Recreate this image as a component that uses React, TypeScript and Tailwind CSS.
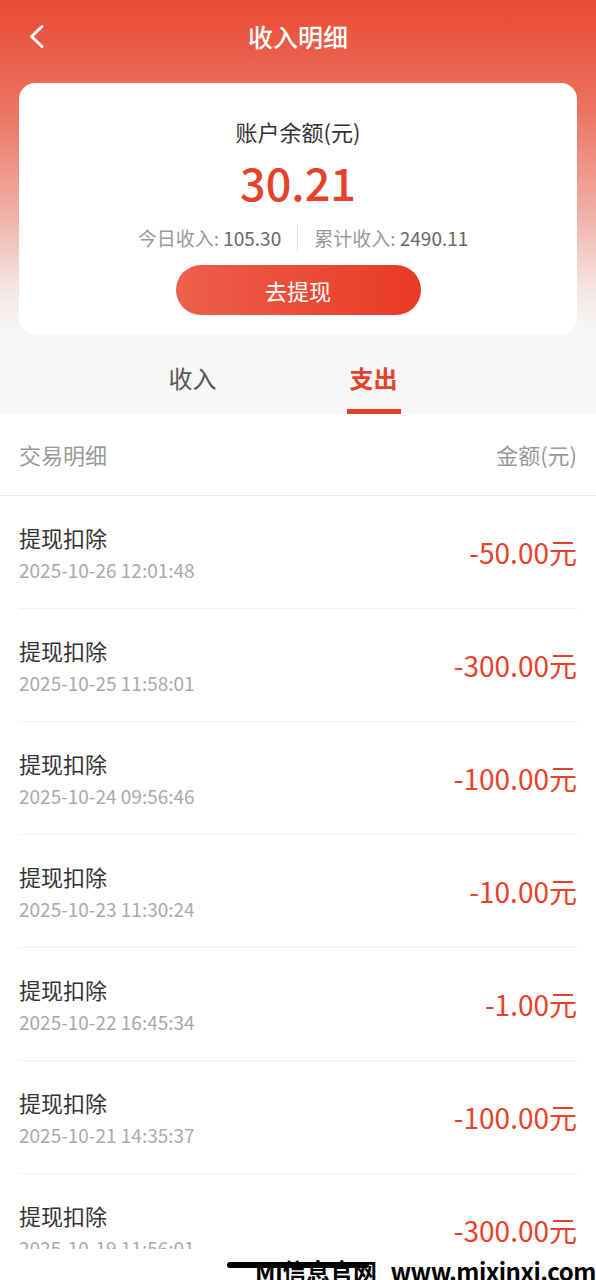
const records = [
  { title: '提现扣除', time: '2025-10-26 12:01:48', amount: '-50.00元' },
  { title: '提现扣除', time: '2025-10-25 11:58:01', amount: '-300.00元' },
  { title: '提现扣除', time: '2025-10-24 09:56:46', amount: '-100.00元' },
  { title: '提现扣除', time: '2025-10-23 11:30:24', amount: '-10.00元' },
  { title: '提现扣除', time: '2025-10-22 16:45:34', amount: '-1.00元' },
  { title: '提现扣除', time: '2025-10-21 14:35:37', amount: '-100.00元' },
  { title: '提现扣除', time: '2025-10-19 11:56:01', amount: '-300.00元' },
];

const App = () => {
  return (
    <div
      className="relative flex h-[1280px] w-full flex-col overflow-hidden bg-white"
      style={{ fontFamily: '"Noto Sans CJK SC", "Noto Sans", sans-serif' }}
    >
      {/* Top gradient area */}
      <div className="bg-[linear-gradient(180deg,#E94A34_0px,#EC7360_110px,#EFAEA4_210px,#F5E6E3_290px,#F7F7F7_330px)]">
        {/* Nav bar */}
        <div className="grid h-[72px] grid-cols-[1fr_auto_1fr] items-center">
          <div className="pl-[28px]">
            <svg width="17" height="25" viewBox="0 0 17 25" fill="none">
              <path d="M14 2.5 L3.5 12.5 L14 22.5" stroke="white" strokeWidth="3" strokeLinecap="round" strokeLinejoin="round" />
            </svg>
          </div>
          <h1 className="text-[25px] font-medium leading-none text-white">收入明细</h1>
          <div />
        </div>

        {/* Balance card */}
        <div className="mx-[19px] mt-[11px] flex h-[251px] flex-col items-center rounded-[16px] bg-white">
          <p className="pt-[33px] text-[22px] leading-[30px] text-[#333]">账户余额(元)</p>
          <p className="mt-[10px] text-[45px] font-medium leading-[52px] text-[#E8412B]">30.21</p>
          <div className="mt-[17px] flex items-center pl-[10px] text-[19px] leading-[26px]">
            <span className="text-[#999]">
              今日收入: <span className="text-[#666]">105.30</span>
            </span>
            <span className="mx-[16px] h-[25px] w-px bg-[#ddd]" />
            <span className="text-[#999]">
              累计收入: <span className="text-[#666]">2490.11</span>
            </span>
          </div>
          <button className="mt-[14px] h-[50px] w-[245px] rounded-full bg-[linear-gradient(90deg,#EC604B,#E83A24)] text-[22px] text-white">
            去提现
          </button>
        </div>

        {/* Tabs */}
        <div className="flex h-[80px] pl-[102px]">
          <div className="flex w-[181px] flex-col items-center pt-[28px]">
            <span className="text-[24px] leading-[32px] text-[#555]">收入</span>
            <span className="mt-[15px] h-[5px] w-[54px] bg-transparent" />
          </div>
          <div className="flex w-[181px] flex-col items-center pt-[28px]">
            <span className="text-[24px] font-bold leading-[32px] text-[#E8412B]">支出</span>
            <span className="mt-[15px] h-[5px] w-[54px] bg-[#E8412B]" />
          </div>
        </div>
      </div>

      {/* List header */}
      <div className="flex h-[82px] items-center justify-between border-b border-[#ececec] px-[19px] text-[22px] text-[#999]">
        <span>交易明细</span>
        <span>金额(元)</span>
      </div>

      {/* Records */}
      <div className="flex-1 overflow-hidden">
        {records.map((r, i) => (
          <div key={i} className="px-[19px]">
            <div className="flex h-[113px] items-center justify-between border-b border-[#f2f2f2]">
              <div>
                <p className="text-[22px] leading-[28px] text-[#333]">{r.title}</p>
                <p className="mt-[7px] text-[19px] leading-[24px] text-[#aaa]">{r.time}</p>
              </div>
              <span className="text-[28px] leading-none text-[#E8412B]">{r.amount}</span>
            </div>
          </div>
        ))}
      </div>
      <div className="h-[31px] shrink-0 bg-white" />

      {/* Home indicator + watermark overlay */}
      <div className="absolute bottom-[12px] left-1/2 h-[6px] w-[142px] -translate-x-1/2 rounded-full bg-black" />
      <div className="absolute left-[255px] top-[1259px] flex gap-[14px] whitespace-nowrap text-[24px] font-bold leading-none tracking-[-0.5px] text-black">
        <span>MI信息官网</span>
        <span>www.mixinxi.com</span>
      </div>
    </div>
  );
};

export default App;
